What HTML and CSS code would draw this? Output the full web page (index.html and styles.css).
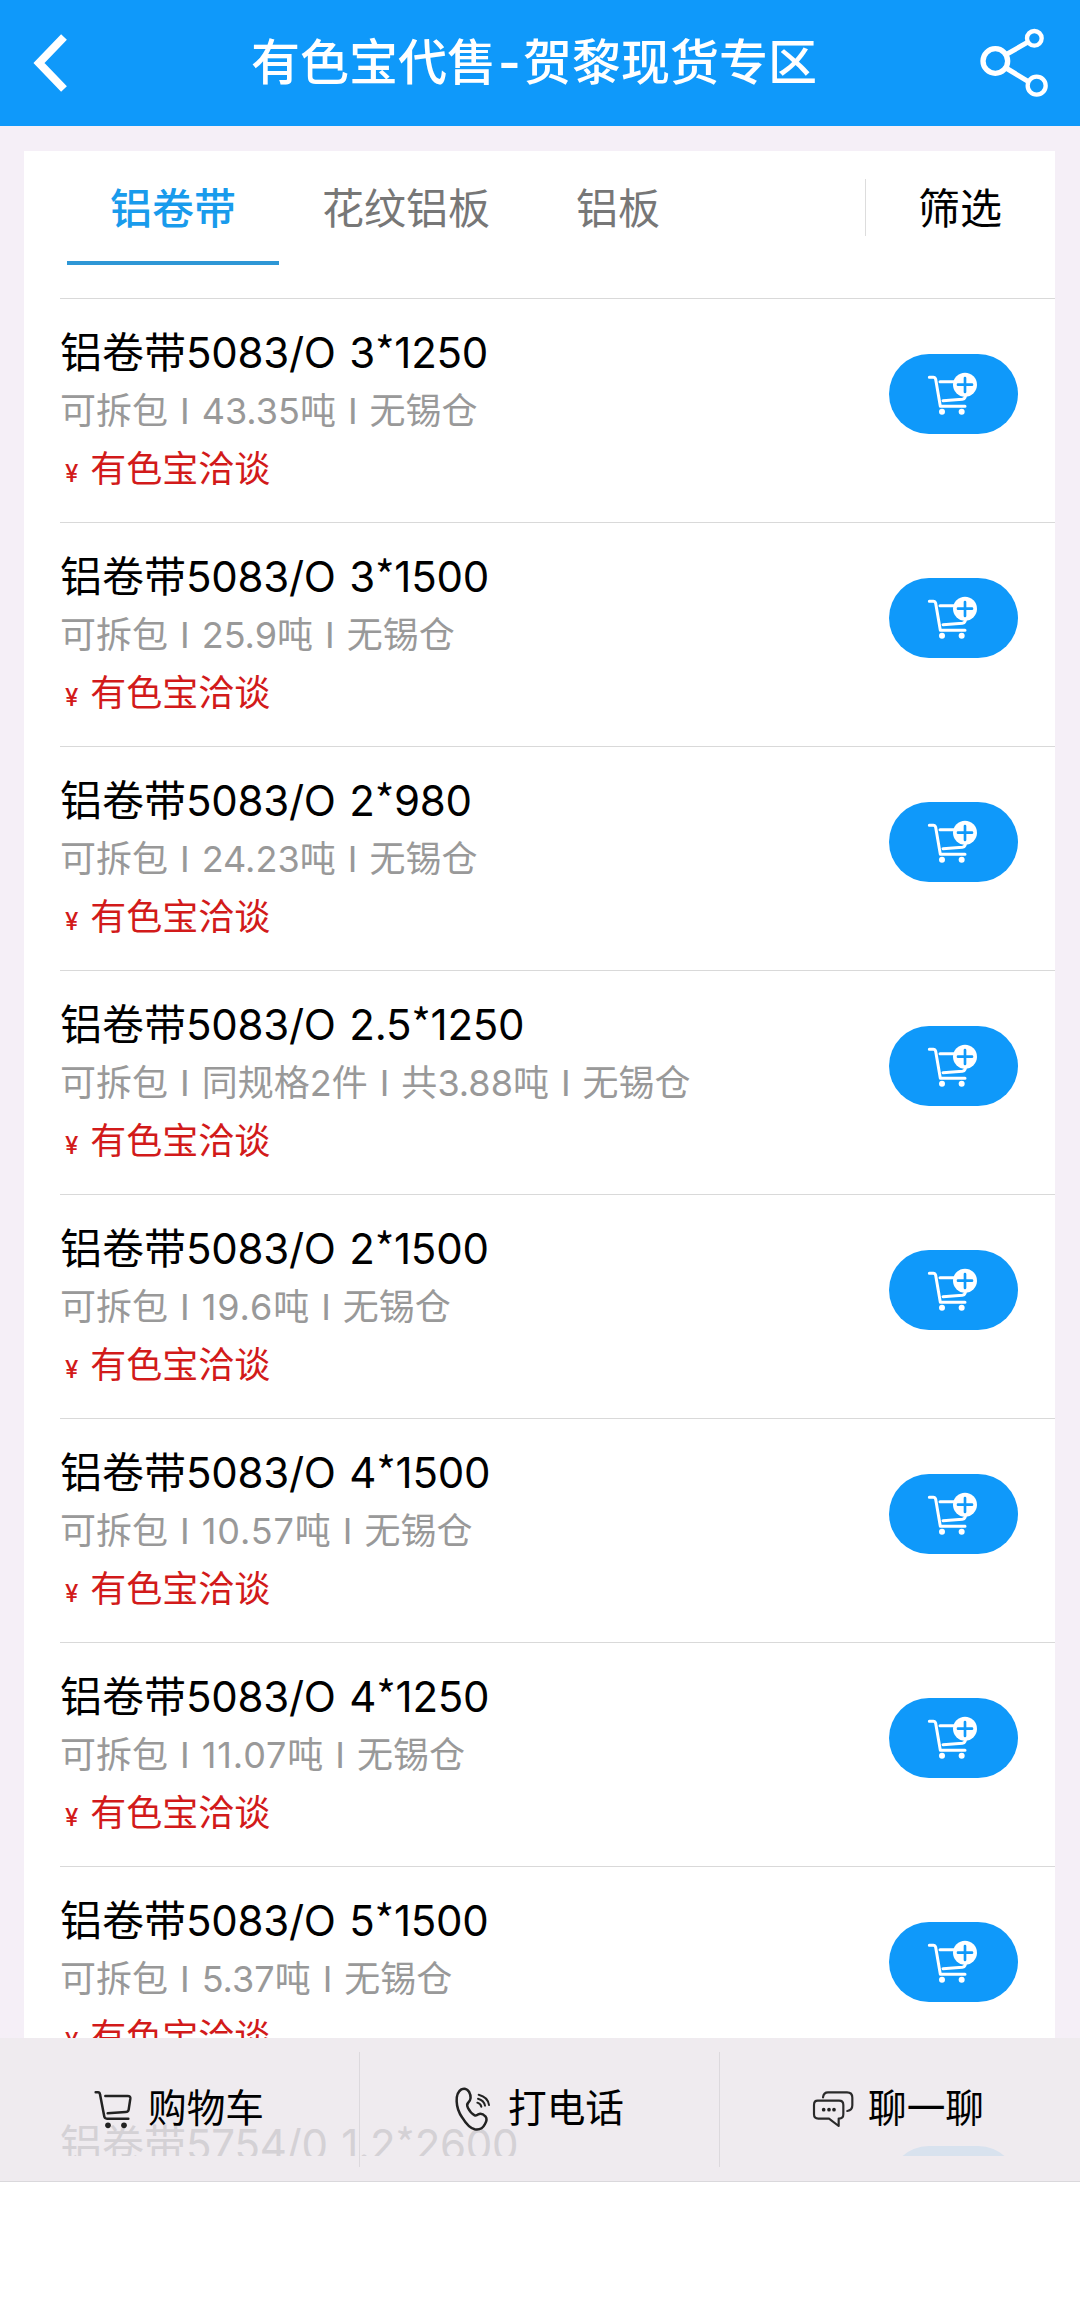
FILE: index.html
```html
<!DOCTYPE html>
<html lang="zh-CN">
<head>
<meta charset="utf-8">
<title>有色宝代售-贺黎现货专区</title>
<link rel="stylesheet" href="styles.css">
</head>
<body>
<svg class="defs" width="0" height="0">
  <symbol id="cart-plus" viewBox="87 72 387 240">
    <g fill="none" stroke="#fff" stroke-width="9" stroke-linecap="round" stroke-linejoin="round">
      <path d="M208 142h12q5 0 7 6l14 81h74"/>
      <path d="M240 155h50M318 190l-3 12q-2 5-8 6l-58 4"/>
    </g>
    <circle cx="246" cy="245" r="9" fill="#fff"/><circle cx="305" cy="245" r="9" fill="#fff"/>
    <circle cx="315" cy="164" r="36" fill="#fff"/>
    <path d="M315 144v42M294 164h42" stroke="#0f99fa" stroke-width="8" stroke-linecap="round"/>
  </symbol>
</svg>
<header class="top">
  <svg class="back" viewBox="0 0 40 66" width="40" height="66"><path d="M32 7L7 33L32 59" fill="none" stroke="#fff" stroke-width="8"/></svg>
  <h1>有色宝代售<span>-</span>贺黎现货专区</h1>
  <svg class="share" viewBox="0 0 360 330" width="120" height="110"><g fill="none" stroke="#fff"><path d="M138 134L206 95M138 174L204 214" stroke-width="15"/><circle cx="106" cy="153" r="37" stroke-width="16"/><circle cx="223" cy="85" r="22" stroke-width="13"/><circle cx="230" cy="227" r="27" stroke-width="13"/></g></svg>
</header>
<main class="card">
  <nav class="tabs">
    <a class="tab active">铝卷带</a><a class="tab">花纹铝板</a><a class="tab">铝板</a>
    <a class="filter">筛选</a>
  </nav>
  <ul class="list">
    <li class="row"><div><h2>铝卷带<span>5083/O 3<em>*</em>1250</span></h2><p class="meta">可拆包<i>I</i><b>43.35</b>吨<i>I</i>无锡仓</p><p class="price"><small>¥</small>有色宝洽谈</p></div><svg class="add"><use href="#cart-plus"/></svg></li>
    <li class="row"><div><h2>铝卷带<span>5083/O 3<em>*</em>1500</span></h2><p class="meta">可拆包<i>I</i><b>25.9</b>吨<i>I</i>无锡仓</p><p class="price"><small>¥</small>有色宝洽谈</p></div><svg class="add"><use href="#cart-plus"/></svg></li>
    <li class="row"><div><h2>铝卷带<span>5083/O 2<em>*</em>980</span></h2><p class="meta">可拆包<i>I</i><b>24.23</b>吨<i>I</i>无锡仓</p><p class="price"><small>¥</small>有色宝洽谈</p></div><svg class="add"><use href="#cart-plus"/></svg></li>
    <li class="row"><div><h2>铝卷带<span>5083/O 2.5<em>*</em>1250</span></h2><p class="meta">可拆包<i>I</i>同规格<b>2</b>件<i>I</i>共<b>3.88</b>吨<i>I</i>无锡仓</p><p class="price"><small>¥</small>有色宝洽谈</p></div><svg class="add"><use href="#cart-plus"/></svg></li>
    <li class="row"><div><h2>铝卷带<span>5083/O 2<em>*</em>1500</span></h2><p class="meta">可拆包<i>I</i><b class="loose">19.6</b>吨<i>I</i>无锡仓</p><p class="price"><small>¥</small>有色宝洽谈</p></div><svg class="add"><use href="#cart-plus"/></svg></li>
    <li class="row"><div><h2>铝卷带<span>5083/O 4<em>*</em>1500</span></h2><p class="meta">可拆包<i>I</i><b class="loose">10.57</b>吨<i>I</i>无锡仓</p><p class="price"><small>¥</small>有色宝洽谈</p></div><svg class="add"><use href="#cart-plus"/></svg></li>
    <li class="row"><div><h2>铝卷带<span>5083/O 4<em>*</em>1250</span></h2><p class="meta">可拆包<i>I</i><b class="loose">11.07</b>吨<i>I</i>无锡仓</p><p class="price"><small>¥</small>有色宝洽谈</p></div><svg class="add"><use href="#cart-plus"/></svg></li>
    <li class="row"><div><h2>铝卷带<span>5083/O 5<em>*</em>1500</span></h2><p class="meta">可拆包<i>I</i><b>5.37</b>吨<i>I</i>无锡仓</p><p class="price"><small>¥</small>有色宝洽谈</p></div><svg class="add"><use href="#cart-plus"/></svg></li>
  </ul>
</main>
<footer class="bar">
  <div class="under"><h2>铝卷带<span>5754/0 1.2<em>*</em>2600</span></h2><div class="pill"></div></div>
  <a class="action"><svg viewBox="0 0 210 180" width="70" height="60"><g fill="none" stroke="#222" stroke-width="7.500" stroke-linecap="round" stroke-linejoin="round"><path d="M47 37h7q5 0 6 6l13 67q1 6 8 6h64"/><path d="M76 48h67q9 0 8 8l-5 33q-1 7-9 7l-54 4"/></g><circle cx="84" cy="136" r="8.500" fill="#222"/><circle cx="132" cy="136" r="8.500" fill="#222"/></svg>购物车</a>
  <a class="action"><svg viewBox="0 0 210 180" width="70" height="60"><g fill="none" stroke="#222" stroke-width="7.500" stroke-linecap="round" stroke-linejoin="round"><path d="M64 28q14-6 23 7q11 21-3 34q-5 5 0 15q8 16 20 22q5 2 11-3q10-5 22 7q6 8-2 22q-10 20-31 16q-19-5-37-35Q51 91 50 64q-1-27 14-36z"/><path d="M116 44q28 7 31 31M114 56q18 5 21 21M112 68q10 3 12 12" stroke-width="6"/></g></svg>打电话</a>
  <a class="action"><svg viewBox="0 0 210 180" width="70" height="60"><g fill="none" stroke="#2a2a2a" stroke-width="6.500" stroke-linejoin="round" stroke-linecap="round"><path d="M53 62h64q13 0 13 13v28q0 13-13 13h-1v22l-29-22H55q-13 0-13-13V75q0-13 11-13z"/><path d="M69 52q2-15 15-15h57q16 0 16 16v23q0 15-15 17"/></g><g fill="#222"><circle cx="71" cy="89" r="5.500"/><circle cx="87" cy="89" r="5.500"/><circle cx="102" cy="89" r="5.500"/></g></svg>聊一聊</a>
</footer>
</body>
</html>
```
FILE: styles.css
```css
* { box-sizing: border-box; margin: 0; padding: 0; }
body { width: 1080px; height: 2308px; background: #fff; overflow: hidden; font-family: Inter, "Noto Sans CJK SC", sans-serif; color: #000; display: flex; flex-direction: column; }
.defs { position: absolute; }
.top { height: 126px; flex: none; background: #0f99fa; color: #fff; display: flex; align-items: flex-start; }
.back { margin: 30px 0 0 32px; }
.top h1 { flex: 1; margin-left: 179px; height: 125px; line-height: 125px; font-size: 49px; font-weight: 500; white-space: nowrap; }
.top h1 span { display: inline-block; width: 27px; text-align: center; font-weight: 600; }
.share { margin-top: 10px; }
.card { height: 1912px; flex: none; background: #f5eff7; padding: 25px 25px 0 24px; overflow: hidden; }
.tabs { height: 147px; background: #fff; display: flex; padding-left: 43px; font-size: 42px; line-height: 60px; color: #777; }
.tab { height: 114px; padding: 28px 43px 0; white-space: nowrap; }
.tab.active { color: #199bec; font-weight: 500; border-bottom: 4px solid #2e97d6; }
.filter { margin: 28px 0 0 auto; width: 190px; height: 57px; border-left: 1px solid #ddd; padding-left: 52px; color: #000; }
.list { list-style: none; background: #fff; padding-left: 36px; }
.row { height: 224px; border-top: 1px solid #d9d9d9; display: flex; justify-content: space-between; padding: 24px 37px 0 0; white-space: nowrap; }
h2 { font-size: 42px; font-weight: 400; line-height: 60px; }
h2 span { letter-spacing: -0.25px; word-spacing: 2px; }
h2 em { font-family: "Noto Sans CJK SC", sans-serif; font-style: normal; line-height: 1; }
.meta { font-size: 36px; line-height: 56px; color: #999; }
.meta i { font-style: normal; margin: 0 12px; }
.meta b { font-weight: 400; }
.meta .loose { letter-spacing: 0.9px; }
.price { font-size: 36px; line-height: 60px; color: #d21a1a; }
.price small { font-size: 24px; font-weight: 500; margin: 0 12px 0 5px; }
.add { width: 129px; height: 80px; margin-top: 31px; background: #0f99fa; border-radius: 40px; }
.bar { height: 144px; flex: none; background: #efebef; border-bottom: 1px solid #dad8dc; display: flex; padding: 14px 0; position: relative; }
.action { width: 360px; height: 115px; padding: 0 0 3px 80px; display: flex; align-items: center; font-size: 38.7px; z-index: 1; line-height: 56px; }
.action:first-of-type { width: 359px; }
.action svg { margin: 4px -2px 0 0; }
.action + .action { border-left: 1px solid #dcd9dd; }
.under { position: absolute; left: 60px; right: 62px; top: 77px; height: 41px; overflow: hidden; display: flex; justify-content: space-between; color: #d4d1d5; }
.pill { width: 129px; height: 80px; margin-top: 31px; border-radius: 40px; background: #d8e2ee; }
```
